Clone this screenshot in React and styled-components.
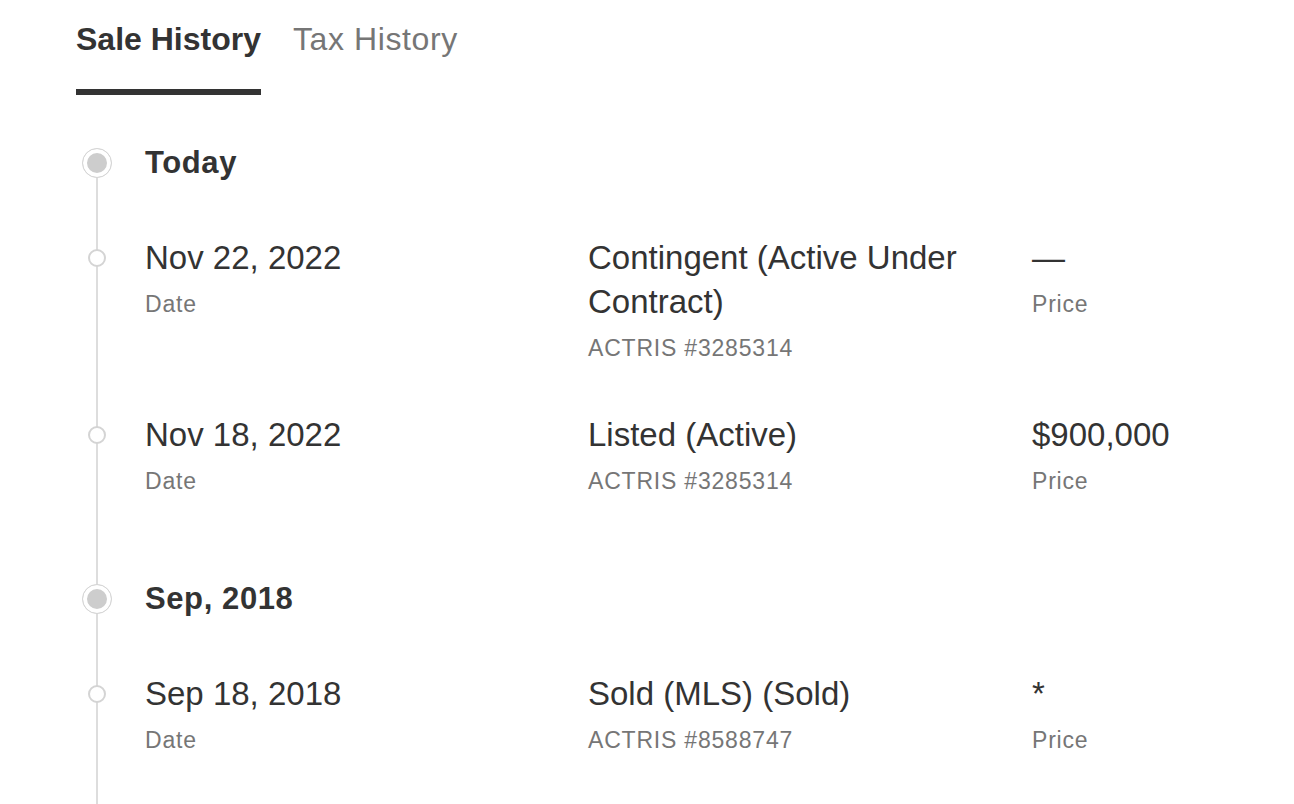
import React, { useState } from "react";
import styled, { createGlobalStyle } from "styled-components";

const GlobalStyle = createGlobalStyle`
  body {
    margin: 0;
    background: #fff;
    font-family: "Liberation Sans", Arial, sans-serif;
    color: #333;
  }
`;

const Page = styled.div`
  padding: 0 0 0 76px;
`;

const Tabs = styled.div`
  display: flex;
  gap: 32px;
`;

const Tab = styled.button`
  background: none;
  border: none;
  padding: 17px 0 28px;
  margin: 0;
  font-family: inherit;
  font-size: 32px;
  line-height: 44px;
  font-weight: ${(p) => (p.$active ? 700 : 400)};
  letter-spacing: ${(p) => (p.$active ? "0" : "0.6px")};
  color: ${(p) => (p.$active ? "#333" : "#767676")};
  border-bottom: 6px solid ${(p) => (p.$active ? "#333" : "transparent")};
  cursor: pointer;
`;

const Timeline = styled.div`
  margin-top: 46px;
  display: flex;
  flex-direction: column;
  background: linear-gradient(#ddd, #ddd) no-repeat;
  background-size: 2px calc(100% - 22px);
  background-position: 20px 22px;
  min-height: 700px;
`;

const Row = styled.div`
  display: grid;
  grid-template-columns: 42px 416px 417px 1fr;
  column-gap: 27px;
  align-items: start;
  padding-bottom: ${(p) => p.$pad}px;
`;

const Rail = styled.div`
  display: flex;
  justify-content: center;
`;

const GroupDot = styled.span`
  box-sizing: border-box;
  width: 30px;
  height: 30px;
  margin-top: 7px;
  border-radius: 50%;
  border: 1px solid #d6d6d6;
  background: #cdcdcd;
  box-shadow: inset 0 0 0 4px #fff;
`;

const EventDot = styled.span`
  box-sizing: border-box;
  width: 18px;
  height: 18px;
  margin-top: 13px;
  border-radius: 50%;
  border: 2px solid #d4d4d4;
  background: #fff;
`;

const GroupTitle = styled.div`
  grid-column: 2 / -1;
  font-size: 31px;
  line-height: 44px;
  font-weight: 700;
  letter-spacing: 0.6px;
  color: #333;
`;

const Cell = styled.div`
  display: flex;
  flex-direction: column;
`;

const Value = styled.div`
  font-size: 33px;
  line-height: 44px;
  color: #333;
`;

const Label = styled.div`
  font-size: 23px;
  line-height: 48px;
  letter-spacing: 0.8px;
  color: #767676;
`;

const history = [
  {
    title: "Today",
    events: [
      {
        date: "Nov 22, 2022",
        event: "Contingent (Active Under Contract)",
        source: "ACTRIS #3285314",
        price: "—",
      },
      {
        date: "Nov 18, 2022",
        event: "Listed (Active)",
        source: "ACTRIS #3285314",
        price: "$900,000",
      },
    ],
  },
  {
    title: "Sep, 2018",
    events: [
      {
        date: "Sep 18, 2018",
        event: "Sold (MLS) (Sold)",
        source: "ACTRIS #8588747",
        price: "*",
      },
    ],
  },
];

const App = () => {
  const [tab, setTab] = useState("sale");

  return (
    <Page>
      <GlobalStyle />
      <Tabs>
        <Tab $active={tab === "sale"} onClick={() => setTab("sale")}>
          Sale History
        </Tab>
        <Tab $active={tab === "tax"} onClick={() => setTab("tax")}>
          Tax History
        </Tab>
      </Tabs>

      <Timeline>
        {history.map((group, gi) => (
          <React.Fragment key={group.title}>
            <Row $pad={51}>
              <Rail>
                <GroupDot />
              </Rail>
              <GroupTitle>{group.title}</GroupTitle>
            </Row>
            {group.events.map((ev, i) => {
              // extra space before the next year group
              const lastInGroup = i === group.events.length - 1 && gi < history.length - 1;
              return (
                <Row key={ev.date} $pad={lastInGroup ? 72 : 41}>
                  <Rail>
                    <EventDot />
                  </Rail>
                  <Cell>
                    <Value>{ev.date}</Value>
                    <Label>Date</Label>
                  </Cell>
                  <Cell>
                    <Value>{ev.event}</Value>
                    <Label>{ev.source}</Label>
                  </Cell>
                  <Cell>
                    <Value>{ev.price}</Value>
                    <Label>Price</Label>
                  </Cell>
                </Row>
              );
            })}
          </React.Fragment>
        ))}
      </Timeline>
    </Page>
  );
};

export default App;
